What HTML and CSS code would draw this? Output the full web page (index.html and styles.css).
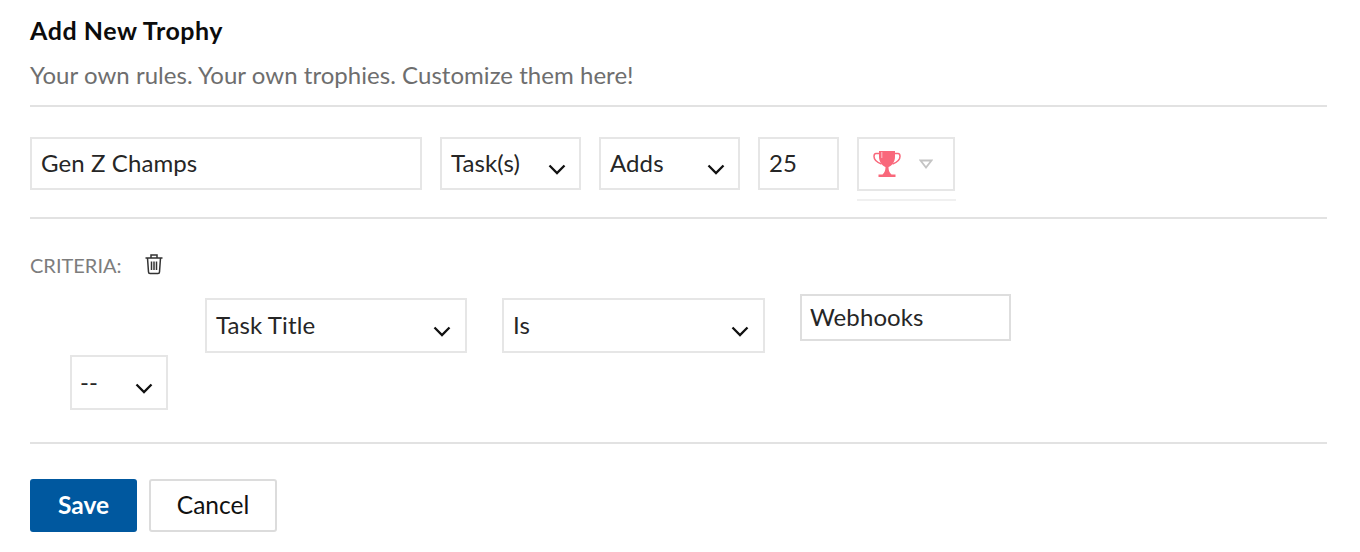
FILE: index.html
```html
<!DOCTYPE html>
<html lang="en">
<head>
<meta charset="utf-8">
<title>Add New Trophy</title>
<link rel="stylesheet" href="styles.css">
</head>
<body>
<main class="page">
  <h1 class="title">Add New Trophy</h1>
  <p class="subtitle">Your own rules. Your own trophies. Customize them here!</p>
  <div class="row-main">
    <div class="field field-name"><span>Gen Z Champs</span></div>
    <div class="field select select-type"><span>Task(s)</span><svg class="chev" viewBox="0 0 18 11"><path d="M1.500 1.500 9 9l7.500-7.500"/></svg></div>
    <div class="field select select-type"><span>Adds</span><svg class="chev" viewBox="0 0 18 11"><path d="M1.500 1.500 9 9l7.500-7.500"/></svg></div>
    <div class="field field-num"><span>25</span></div>
    <div class="trophy-wrap">
      <div class="field trophy">
        <svg class="cup" viewBox="0 0 28 28">
          <path class="cup-fill" d="M6 1h16v6c0 5-3.500 9-6.500 10 0 3 .8 6 3 7.500h4V27H5.500v-2.500h4c2.200-1.500 3-4.500 3-7.500C9.500 16 6 12 6 7z"/>
          <path class="cup-handle" d="M6 3.500H3C1.500 3.500 1 5 1 6.500c0 3.500 3.500 6 7.500 7.500M22 3.500h3c1.500 0 2 1.500 2 3 0 3.500-3.500 6-7.500 7.500"/>
          <path class="cup-shine" d="M8.800 2v6"/>
        </svg>
        <svg class="caret" viewBox="0 0 14 10"><path d="M1.500 1.500h11L7 8.500z"/></svg>
      </div>
    </div>
  </div>
  <section class="criteria">
    <div class="criteria-head">
      <span class="criteria-label">CRITERIA:</span>
      <svg class="trash" viewBox="0 0 20 22">
        <path d="M1.500 5h17M7 5V2h6v3M3.500 5l1 14c0 1 .6 1.500 1.500 1.500h8c.9 0 1.500-.5 1.500-1.500l1-14M7.500 8.500v8.500M10 8.500v8.500M12.500 8.500v8.500"/>
      </svg>
    </div>
    <div class="criteria-row">
      <div class="field select select-wide"><span>Task Title</span><svg class="chev" viewBox="0 0 18 11"><path d="M1.500 1.500 9 9l7.500-7.500"/></svg></div>
      <div class="field select select-wide"><span>Is</span><svg class="chev" viewBox="0 0 18 11"><path d="M1.500 1.500 9 9l7.500-7.500"/></svg></div>
      <div class="field field-value"><span>Webhooks</span></div>
    </div>
    <div class="field select select-join"><span>--</span><svg class="chev" viewBox="0 0 18 11"><path d="M1.500 1.500 9 9l7.500-7.500"/></svg></div>
  </section>
  <div class="actions">
    <button class="btn btn-save" type="button">Save</button>
    <button class="btn btn-cancel" type="button">Cancel</button>
  </div>
</main>
</body>
</html>
```
FILE: styles.css
```css
* { box-sizing: border-box; }
html, body { margin: 0; background: #fff; }
body { font-family: Lato, "Noto Sans", "Liberation Sans", sans-serif; color: #222; }
.page { width: 1360px; height: 552px; padding: 15px 33px 0 30px; overflow: hidden; }
.title { margin: 0; font-size: 25px; line-height: 30px; font-weight: 700; letter-spacing: .55px; color: #0c0c0c; }
.subtitle { margin: 15px 0 0; padding-bottom: 15px; font-size: 24px; letter-spacing: .04px; line-height: 30px; color: #6e6e6e; border-bottom: 2px solid #e2e2e2; }
.row-main { display: flex; gap: 18px; align-items: flex-start; padding: 30px 0 0; height: 112px; border-bottom: 2px solid #e2e2e2; }
.field { display: flex; align-items: center; padding: 0 9px; height: 53px; border: 2px solid #e6e6e6; font-size: 24px; letter-spacing: .1px; color: #262626; background: #fff; }
.field span { position: relative; top: -1px; }
.field-name { width: 392px; }
.select { justify-content: space-between; }
.chev { width: 18px; height: 11px; margin: 11px 4px 0 0; flex: none; }
.chev path { fill: none; stroke: #111; stroke-width: 2.300; }
.select-type { width: 141px; }
.field-num { width: 81px; }
.trophy-wrap { height: 64px; width: 99px; border-bottom: 2px solid #f0f0f0; }
.trophy { width: 98px; height: 54px; padding: 0 20px 0 14px; justify-content: space-between; }
.cup { width: 28px; height: 28px; flex: none; }
.cup-fill { fill: #f9687b; }
.cup-handle { fill: none; stroke: #f9687b; stroke-width: 1.500; }
.cup-shine { fill: none; stroke: #fdc3cb; stroke-width: 1; }
.caret { width: 14px; height: 10px; flex: none; }
.caret path { fill: #fff; stroke: #c4c4c4; stroke-width: 1.800; }
.criteria { height: 225px; border-bottom: 2px solid #e2e2e2; }
.criteria-head { display: flex; align-items: center; gap: 22px; padding-top: 18px; height: 75px; }
.criteria-label { font-size: 20px; line-height: 26px; margin-top: -2px; color: #7d7d7d; }
.trash { width: 20px; height: 22px; margin-top: -3px; }
.trash path { fill: none; stroke: #333; stroke-width: 1.500; }
.criteria-row { display: grid; grid-template-columns: 262px 263px 211px; align-items: start; gap: 35px; margin-left: 175px; height: 61px; }
.select-wide { height: 55px; margin-top: 4px; }
.select-wide .chev { margin-right: 5px; }
.field-value { height: 47px; padding: 0 8px; border-color: #dedede; }
.select-join { width: 98px; height: 55px; margin: 0 0 0 40px; padding-left: 8px; }
.actions { display: flex; gap: 12px; padding-top: 35px; }
.btn { height: 53px; padding: 0; border-radius: 3px; font: 400 24.500px/1 Lato, "Noto Sans", sans-serif; }
.btn-save { width: 107px; border: 0; background: #00589f; color: #fff; font-weight: 700; }
.btn-cancel { width: 128px; border: 2px solid #dcdcdc; background: #fff; color: #111; }
```
